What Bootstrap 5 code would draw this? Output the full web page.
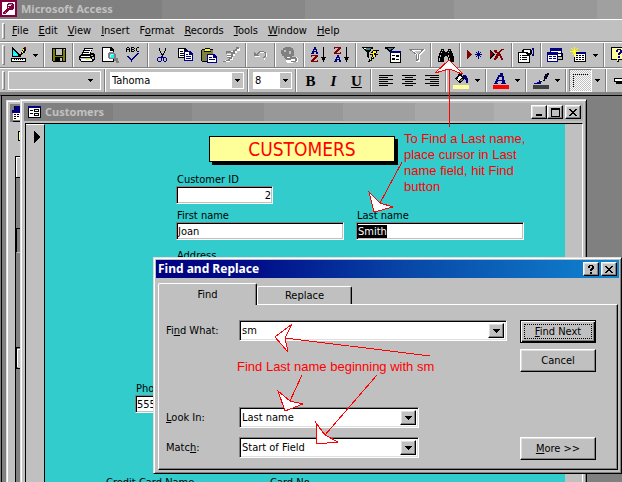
<!DOCTYPE html>
<html lang="en">
<head>
<meta charset="utf-8">
<meta name="viewport" content="width=device-width, initial-scale=1">
<title>Microsoft Access</title>
<link href="https://cdn.jsdelivr.net/npm/bootstrap@5.3.0/dist/css/bootstrap.min.css" rel="stylesheet">
<style>
:root{--face:#c0c0c0;--shade:#808080;--lite:#dfdfdf}
body{font:11px/14px "DejaVu Sans Condensed","Noto Sans",sans-serif;color:#000;background:var(--shade)}
svg{display:block;flex:none;shape-rendering:crispEdges}
button,select,input{font:inherit;color:#000;border-radius:0}
button{background:var(--face);border:0;padding:0}
select{appearance:none;border:0;background:none;padding:0 3px;outline:0}
u{text-underline-offset:1px}
.caption{font-family:"Noto Sans","DejaVu Sans",sans-serif;font-weight:700;line-height:18px}
.app-caption{height:19px;color:var(--face);background:linear-gradient(90deg,#808080 26%,#888 26% 49%,#909090 49% 73%,#989898 73% 96%,#a0a0a0 96%)}
.band{flex:none;background:var(--face);border-top:1px solid #fff;border-bottom:1px solid var(--shade)}
.menu-band{height:23px;padding-top:1px}
.tool-band{height:26px}
.format-band{height:27px;border-bottom-width:3px}
.grip{width:3px;flex:none;margin:2px;border:1px solid;border-color:#fff var(--shade) var(--shade) #fff}
.menu-item{padding:0 5px}
.tool{width:23px;flex:none;display:flex;align-items:center;justify-content:center}
.caret-tool{width:11px;flex:none;display:flex;align-items:center;justify-content:center}
.divide{width:2px;flex:none;margin:0 2px;border-left:1px solid var(--shade);border-right:1px solid #fff}
.glyph{font:700 15px/20px "Liberation Serif",serif}
.flatbox{flex:none;border:1px solid #fff;margin:2px 1px;width:93px}
.flatbox select,.whitebox select{width:100%;min-width:0}
.whitebox{flex:none;border:1px solid #fff;background:#fff;margin:3px 1px 3px 2px}
.whitebox select{padding:0 1px}
.whitebox .drop{background:var(--face)}
.drop{width:11px;flex:none;display:flex;align-items:center;justify-content:center}
.font-list{width:134px}
.size-list{width:39px}
.pressed{border:1px solid;border-color:var(--shade) #fff #fff var(--shade);background:repeating-conic-gradient(#fff 0 25%,#c0c0c0 0 50%) 0 0/2px 2px}
.desk{border-top:1px solid #000;border-left:1px solid var(--shade);box-shadow:inset 1px 0 #000}
.win{position:absolute;background:var(--face);border:1px solid;border-color:var(--lite) #000 #000 var(--lite);box-shadow:inset 1px 1px #fff,inset -1px -1px var(--shade);padding:3px}
.db-win{left:5px;top:4px;width:300px;bottom:-20px}
.form-win{left:19px;top:3px;right:35px;bottom:-20px}
.dialog{left:152px;top:161px;right:0;z-index:2;padding:2px}
.form-caption{height:18px;color:var(--face);background:linear-gradient(90deg,#808080 16%,#888 16% 30%,#909090 30% 43%,#989898 43% 57%,#a0a0a0 57% 70%,#a8a8a8 70% 84%,#b0b0b0 84%)}
.dialog-caption{height:18px;padding:0 2px;font-size:12px;color:#fff;background:linear-gradient(90deg,#000080,#000c88 20%,#0848a8 55%,#1084d0)}
.raised{border:1px solid;border-color:#fff #000 #000 #fff;box-shadow:inset -1px -1px var(--shade),inset 1px 1px var(--lite)}
.cap-btn{width:16px;height:14px;display:flex;align-items:center;justify-content:center}
.cap-close{margin-left:2px}
.form-caption .cap-close{margin-right:2px}
.form-view{margin:2px 0 0 1px;border-top:1px solid #000;border-left:1px solid #000;border-right:1px solid #fff}
.selector{width:19px;border-right:1px solid #000;border-top:1px solid #fff;padding:6px 0 0 8px}
.canvas{background:#33cccc;padding-top:12px}
.scroll-strip{width:17px}
.banner{width:186px;height:26px;margin-left:164px;border:1px solid #000;background:#ffff99;color:#f00;box-shadow:3px 3px #000;font-size:19px;line-height:25px}
.fields{margin-left:131px;padding-top:10px}
.sunk{display:block;width:100%;height:18px;background:#fff;border:1px solid;border-color:var(--shade) #fff #fff var(--shade);box-shadow:inset 1px 1px #000,inset -1px -1px var(--face);padding:0 1px;outline:0}
.sunk::selection{background:#000;color:#fff}
.fld label{display:block;padding-left:1px;height:14px;line-height:16px}
.w-id{width:97px}
.w-name{width:168px}
.last{margin-left:12px}
.phone{margin:119px 0 0 90px}
.credit{margin:63px 0 0 61px}
.ccn{width:164px}
.tab-row{margin:4px 2px 0;height:22px}
.tab-btn{border:1px solid;border-color:#fff #000 transparent #fff;border-bottom:0;border-radius:2px 2px 0 0;box-shadow:inset -1px 0 var(--shade)}
.tab-on{width:99px;height:22px;margin-bottom:-1px;z-index:1}
.tab-off{width:95px;height:18px}
.sheet{margin:0 1px 1px 2px;border:1px solid;border-color:#fff #000 #000 #fff;box-shadow:inset -1px -1px var(--shade);padding:15px 21px 9px 7px}
.lab{width:73px;flex:none}
.combo{height:21px;background:#fff;border:1px solid;border-color:var(--shade) #fff #fff var(--shade);box-shadow:inset 1px 1px #000,inset -1px -1px var(--lite);padding:2px}
.combo select,.combo input{border:0;outline:0;background:none;flex:1;min-width:0;padding:0}
.combo .drop{width:16px;background:var(--face)}
.w-short{width:180px}
.look{margin-top:66px}
.match{margin:9px 0 2px}
.push{width:76px;height:23px}
.cancel{margin-top:6px}
.default{border-color:#000;box-shadow:inset 1px 1px #fff,inset -1px -1px #000,inset -2px -2px var(--shade)}
.default span{display:block;margin:3px;border:1px dotted #000;line-height:13px}
.side{margin-left:13px}
.note{position:absolute;z-index:4;color:#f00;font:13px/16px "Liberation Sans",Arial,sans-serif;margin:0}
.note-a{left:404px;top:131px;width:136px}
.note-b{left:237px;top:359px;white-space:nowrap}
.arrows{position:absolute;left:0;top:0;z-index:3;pointer-events:none}
</style>
<script src="https://cdn.jsdelivr.net/npm/bootstrap@5.3.0/dist/js/bootstrap.bundle.min.js"></script>
</head>
<body>
<svg width="0" height="0" class="position-absolute" aria-hidden="true">
  <symbol id="tri" viewBox="0 0 5 3"><path d="M0 0h5v1H4v1H3v1H2V2H1V1H0z"/></symbol>
  <symbol id="bigtri" viewBox="0 0 7 4"><path d="M0 0h7v1H6v1H5v1H4v1H3V3H2V2H1V1H0z"/></symbol>
  <symbol id="cross" viewBox="0 0 8 7"><path d="M0 0h2v1h1v1h2V1h1V0h2v1H7v1H6v1H5v1h1v1h1v1h1v1H6V6H5V5H3v1H2v1H0V6h1V5h1V4h1V3H2V2H1V1H0z"/></symbol>
</svg>
<div class="vh-100 d-flex flex-column overflow-hidden position-relative">
  <header class="app-caption caption d-flex flex-shrink-0">
    <svg width="17" height="17" viewBox="0 0 17 17"><path fill="#800040" d="M0 0h17v17H0z"/><path fill="#fff" d="M2 2h13v13H2z"/><path fill="#800040" d="M8 3h5v1h1v5h-1v1H9v1H8v1H7v1H6v1H3v-2h1v-1h1v-1h1V9h1V4h1z"/><path fill="#fff" d="M8 5h3v1H8zM8 7h1v1H8z"/><path fill="#c080a0" d="M9 4h3v1H9zM5 12h1v1H5z"/></svg>
    <span class="ms-1">Microsoft Access</span>
  </header>

  <nav class="band menu-band d-flex" aria-label="Menu">
    <span class="grip"></span>
    <button class="menu-item"><u>F</u>ile</button><button class="menu-item"><u>E</u>dit</button><button class="menu-item"><u>V</u>iew</button><button class="menu-item"><u>I</u>nsert</button><button class="menu-item">F<u>o</u>rmat</button><button class="menu-item"><u>R</u>ecords</button><button class="menu-item"><u>T</u>ools</button><button class="menu-item"><u>W</u>indow</button><button class="menu-item"><u>H</u>elp</button>
  </nav>

  <div class="band tool-band d-flex" role="toolbar" aria-label="Form view">
    <span class="grip"></span>
    <button class="tool" aria-label="Design view"><svg width="16" height="16"><path d="M1 0h1v1h1v1h1v1h1v1h1v1h1v1h1v1h1v1h1v2H1zM0 11h15v4H0z"/><path fill="#0ff" d="M2 3h1v1h1v1h1v1h1v1h1v2H2z"/><path fill="#fff" d="M4 7h1v1H4zM1 12h13v2H1z"/><path d="M3 12h1v1H3zM5 12h1v1H5zM7 12h1v1H7zM9 12h1v1H9zM11 12h1v1h-1zM9 7h1V5h1V3h1V1h2v1h1v2h-1v2h-2v1h-1v1H9z"/><path fill="#ff0" d="M11 4h1V2h1v2h-1v2h-1z"/><path fill="#800000" d="M13 0h2v2h-1V1h-1z"/></svg></button>
    <button class="caret-tool" aria-label="Views"><svg width="5" height="3"><use href="#tri"/></svg></button>
    <span class="divide"></span>
    <button class="tool" aria-label="Save"><svg width="14" height="14"><path d="M0 0h14v14H1v-1H0z"/><path fill="#808000" d="M1 1h12v12H1z"/><path d="M3 1h8v7H3zM3 9h8v4H3z"/><path fill="#c0c0c0" d="M4 1h6v6H4zM12 1h1v1h-1zM8 10h2v3H8z"/></svg></button>
    <span class="divide"></span>
    <button class="tool" aria-label="Print"><svg width="17" height="15"><path d="M5 0h9v1h-1v2h-1v2h3v1h1v6h-1v1h-1v1H2v-1H1v-1H0V8h1V7h1V6h1V4h1V2h1z"/><path fill="#fff" d="M6 1h7v1h-1v2h-1v2H4V5h1V3h1zM2 8h9v1H2zM2 11h11v2H2z"/><path fill="#c0c0c0" d="M12 7h2v1h-2zM13 9h2v2h-2zM1 10h11v1H1z"/><path fill="#ff0" d="M7 11h3v1H7z"/><path d="M6 2h5v1H6zM5 4h5v1H5z"/></svg></button>
    <button class="tool" aria-label="Print preview"><svg width="17" height="16"><path d="M0 0h9l3 3v12H0z"/><path fill="#fff" d="M1 1h7v3h3v10H1z"/><path d="M8 1h1v2h2v1H8z"/><path fill="#808080" d="M7 5h5v1h1v1h1v4h2v3h1v2h-3v-2h-2v-2H7v-1H6V6h1z"/><path fill="#0ff" d="M8 7h4v4H8z"/><path fill="#fff" d="M9 7h2v1H9zM8 8h1v2H8z"/></svg></button>
    <button class="tool" aria-label="Spelling"><svg width="16" height="16"><path d="M1 0h2v1h1v4H3V3H1v2H0V1h1zM1 1v1h2V1zM5 0h3v1h1v1H8v1h1v1H8v1H5zM6 1v1h2V1zM6 3v1h2V3zM11 0h2v1h-2v3h2v1h-2V4h-1V1h1z"/><path fill="#000080" d="M1 9h2v1h1v1h1v1h1v-1h1v-1h1V9h1V8h1V7h1V6h2v1h-1v1h-1v1h-1v1H9v1H8v1H7v1H6v2H5v-2H4v-1H3v-1H2v-1H1z"/></svg></button>
    <span class="divide"></span>
    <button class="tool" aria-label="Cut"><svg width="11" height="15"><path d="M2 0h1v3h1v2h1v1h1V5h1V3h1V0h1v3H8v2H7v2H6v2H5V7H4V5H3V3H2z"/><path fill="#000080" d="M5 8h1v1h3v1h1v3H9v1H7v-1H6v-3H5v3H4v1H1v-1H0v-3h1V9h3V8zM2 10H1v3h3v-3zM7 10v3h2v-3z"/></svg></button>
    <button class="tool" aria-label="Copy"><svg width="16" height="14"><path d="M0 0h7l3 3v7H0z"/><path fill="#fff" d="M1 1h5v3h3v5H1z"/><path d="M2 3h3v1H2zM2 5h4v1H2zM2 7h4v1H2z"/><path fill="#000080" d="M6 3h6l3 3v7H6z"/><path fill="#fff" d="M7 4h4v3h3v5H7z"/><path fill="#000080" d="M8 6h2v1H8zM8 8h5v1H8zM8 10h5v1H8z"/></svg></button>
    <button class="tool" aria-label="Paste"><svg width="16" height="15"><path d="M1 1h3V0h5v1h3v13H1v-1H0V2h1z"/><path fill="#808040" d="M1 2h11v11H1z"/><path fill="#ff0" d="M4 1h5v2H4z"/><path d="M3 3h7v1H3z"/><path fill="#000080" d="M6 6h7l3 3v6H6z"/><path fill="#fff" d="M7 7h5v3h3v4H7z"/><path fill="#000080" d="M8 9h3v1H8zM8 11h6v1H8z"/></svg></button>
    <button class="tool" aria-label="Format painter" disabled><svg width="17" height="16"><path fill="#fff" d="M14 1h3v3h-3v2h-2v3h-2v4H7v2H2v-2h3v-3H4V6h4V4h3z"/><path fill="#808080" d="M13 0h3v2h-2v2h-2v3h-2v3H9v2H7v2H3v1H0v-1h3v-1h2v-1h1v-1H4v-1h4V9H4V8h4V7H3V4h5v1h2V3h2V2h1z"/><path fill="#c0c0c0" d="M4 6h4v1H4zM5 11h1v1H5z"/></svg></button>
    <span class="divide"></span>
    <button class="tool" aria-label="Undo" disabled><svg width="14" height="10"><path fill="#fff" d="M1 3h1v2h1v1h3v1H1zM6 2h5v1h2v4h-2v3h-1V7h2V4h-1V3H6z"/><path fill="#808080" d="M0 2h1v1h1v1h1V3h1V2h1V1h5v1h2v5h-1v1h-2V7h1V6h1V3h-1V2H6v1H5v1H4v1h1v1H0z"/></svg></button>
    <span class="divide"></span>
    <button class="tool" aria-label="Insert hyperlink" disabled><svg width="17" height="16"><path fill="#808080" d="M4 0h6v1h2v2h1v6h-2v2H3V9H1V7H0V3h2V1h2z"/><path fill="#c0c0c0" d="M3 3h2v2H3zM8 4h2v3H8z"/><path fill="#fff" d="M6 9h5v1h5v1h1v4h-5v1H6v-1H5v-5h1z"/><path fill="#808080" d="M5 8h5v1h1v3h-1v1H5v-1H4V9h1zM6 10v1h3v-1zM10 10h5v1h1v3h-1v1h-5v-1h4v-2h-4z"/></svg></button>
    <span class="divide"></span>
    <button class="tool" aria-label="Sort ascending"><svg width="16" height="16"><path fill="#000080" d="M3 0h2v2h1v3h1v2H5V5H3v2H0V6h1V4h1V2h1zM3 3v1h2V3z"/><path fill="#800000" d="M0 8h7v2H6v1H5v1H4v1H3v1h3v-1h1v2H0v-2h1v-1h1v-1h1v-1h1V9H1v1H0z"/><path d="M12 0h1v10h2v1h-1v2h-1v2h-1v-2h-1v-2h-1v-1h2z"/></svg></button>
    <button class="tool" aria-label="Sort descending"><svg width="16" height="16"><path fill="#800000" d="M0 0h7v2H6v1H5v1H4v1H3v1h3V5h1v2H0V5h1V4h1V3h1V2h1V1H1v1H0z"/><path fill="#000080" d="M3 8h2v2h1v3h1v2H5v-2H3v2H0v-1h1v-2h1v-2h1zM3 11v1h2v-1z"/><path d="M12 0h1v10h2v1h-1v2h-1v2h-1v-2h-1v-2h-1v-1h2z"/></svg></button>
    <span class="divide"></span>
    <button class="tool" aria-label="Filter by selection"><svg width="17" height="16"><path d="M0 0h11v2H9v2H8v1H7v6H6v-1H5V5H4V4H3V3H2V2H1V1H0z"/><path fill="#408080" d="M2 1h7L8 3H4z"/><path fill="#fff" d="M2 1h2v1H2z"/><path d="M11 3h6v1h-2v2h-1v1h2v1h-2v2h-2v2h-2v2H8v1H6v-1h1v-2h2v-2h1V8H8V7h1V5h1z"/><path fill="#ff0" d="M11 4h3v2h-2v2h1v2h-2v1h-1v1H9v1H8v-1h2v-2h1V7H9V6h2z"/></svg></button>
    <button class="tool" aria-label="Filter by form"><svg width="17" height="16"><path d="M0 0h10v1H9v1H8v1H7v1H6v6H5V5H4V4H3V3H2V2H0z"/><path fill="#408080" d="M2 1h6v1H6v1H4z"/><path d="M5 4h11v12H5z"/><path fill="#000080" d="M5 4h11v2H5z"/><path fill="#fff" d="M6 6h9v9H6z"/><path d="M7 8h3v1H7zM11 8h3v2h-3zM7 11h3v2H7zM11 12h3v1h-3z"/></svg></button>
    <button class="tool" aria-label="Apply filter" disabled><svg width="16" height="14"><path fill="none" stroke="#fff" stroke-width="2" d="M2 2h13l-5 5v6H8V7L3 2"/><path fill="none" stroke="#808080" d="M1 1.500h13L9.500 6.500v5l-2 1v-6z"/></svg></button>
    <span class="divide"></span>
    <button class="tool" aria-label="Find"><svg width="16" height="13"><path d="M3 0h3v2h1v1h2V2h1V0h3v2h1v2h1v3h1v6h-6V8H9V7H7v1H6v5H0V7h1V4h1V2h1z"/><path fill="#c0c0c0" d="M3 3h1v1H3zM2 6h1v2H2zM1 9h1v3H1zM10 3h1v1h-1zM10 6h1v2h-1zM11 9h1v3h-1zM4 1h1v1H4zM11 1h1v1h-1z"/></svg></button>
    <span class="divide"></span>
    <button class="tool" aria-label="New record"><svg width="15" height="10"><path fill="#800000" d="M0 0h1v1h1v1h1v1h1v1h1v1H4v1H3v1H2v1H1v1H0z"/><path fill="#000080" d="M11 1h1v2h1V2h1v1h-1v1h2v1h-2v1h1v1h-1V6h-1v3h-1V6h-1v1H9V6h1V5H8V4h2V3H9V2h1v1h1z"/></svg></button>
    <button class="tool" aria-label="Delete record"><svg width="15" height="13"><path d="M0 1h1v1h1v1h1v1h1v1h1v1H4v1H3v1H2v1H1v1H0z"/><path fill="#800000" d="M0 2l4 3-4 3zM4 1h3v2h2V2h1V1h1V0h3v1h-2v1h-1v1h-1v2h1v2h1v2h1v2h-2V9h-1V7H8v2H7v1H6v1H4V9h1V7h1V5h1V4H5V3H4z"/></svg></button>
    <span class="divide"></span>
    <button class="tool" aria-label="Properties"><svg width="17" height="15"><path d="M0 4h12v11H0z"/><path fill="#fff" d="M1 5h10v9H1z"/><path d="M2 7h1v1H2zM4 7h5v1H4zM2 9h1v1H2zM4 9h5v1H4zM2 11h1v1H2zM4 11h5v1H4z"/><path d="M5 1h8v1h1v4h-1v1h-2v1H9V6H8V5H6V4H4V2h1z"/><path fill="#fff" d="M6 2h6v3h-2V4H6z"/><path fill="#000080" d="M14 0h2v8h-2V6h1V2h-1z"/></svg></button>
    <span class="divide"></span>
    <button class="tool" aria-label="Database window"><svg width="17" height="15"><path fill="#000080" d="M3 0h12v9H3z"/><path fill="#fff" d="M4 3h10v5H4z"/><path fill="#000080" d="M0 4h11v10H0z"/><path fill="#fff" d="M1 7h9v6H1z"/><path fill="#000080" d="M2 8h3v1H2zM6 8h3v1H6zM2 10h3v1H2zM6 10h3v1H6z"/><path d="M11 5h5v7h-5v-1h4V9h-4V8h4V6h-4z"/></svg></button>
    <button class="tool" aria-label="New object"><svg width="17" height="16"><path d="M4 5h12v10H4z"/><path fill="#000080" d="M5 5h11v2H5z"/><path fill="#fff" d="M5 7h10v7H5z"/><path d="M6 8h2v1H6zM9 8h2v1H9zM12 8h2v1h-2zM6 10h2v1H6zM9 10h2v1H9zM12 10h2v1h-2zM6 12h2v1H6zM9 12h2v1H9zM12 12h2v1h-2z"/><path fill="#ff0" d="M4 0h1v3h1V2h1V1h1v1H7v1H6v1h3v1H6v2h1v1H6V7H5v3H4V7H3v1H2V7h1V5H0V4h3V3H2V2H1V1h1v1h1v1h1z"/><path fill="#fff" d="M4 4h1v1H4z"/></svg></button>
    <button class="caret-tool" aria-label="New object list"><svg width="5" height="3"><use href="#tri"/></svg></button>
    <span class="divide"></span>
    <button class="tool" aria-label="Help"><svg width="16" height="16"><path d="M0 0h16v13H8v2H6v-2H0z"/><path fill="#ff9" d="M1 1h14v11H7v2H6v-2H1z"/><path fill="#000080" d="M5 3h1V2h4v1h1v3h-1v1H9v1H7V6h1V5h1V3H7v2H5zM7 9h2v2H7z"/></svg></button>
  </div>

  <div class="band format-band d-flex" role="toolbar" aria-label="Formatting">
    <span class="grip"></span>
    <div class="flatbox d-flex"><select aria-label="Object"><option></option></select><span class="drop me-1"><svg width="5" height="3"><use href="#tri"/></svg></span></div>
    <span class="divide"></span>
    <div class="whitebox font-list d-flex"><select aria-label="Font"><option>Tahoma</option></select><span class="drop"><svg width="5" height="3"><use href="#tri"/></svg></span></div>
    <span class="divide"></span>
    <div class="whitebox size-list d-flex"><select aria-label="Font size"><option>8</option></select><span class="drop"><svg width="5" height="3"><use href="#tri"/></svg></span></div>
    <span class="divide"></span>
    <button class="tool glyph">B</button><button class="tool glyph fst-italic">I</button><button class="tool glyph text-decoration-underline">U</button>
    <span class="divide"></span>
    <button class="tool" aria-label="Align left"><svg width="14" height="11"><path d="M0 0h14v1H0zM0 2h9v1H0zM0 4h14v1H0zM0 6h9v1H0zM0 8h14v1H0zM0 10h9v1H0z"/></svg></button>
    <button class="tool" aria-label="Center"><svg width="14" height="11"><path d="M0 0h14v1H0zM3 2h8v1H3zM0 4h14v1H0zM3 6h8v1H3zM0 8h14v1H0zM3 10h8v1H3z"/></svg></button>
    <button class="tool" aria-label="Align right"><svg width="14" height="11"><path d="M0 0h14v1H0zM5 2h9v1H5zM0 4h14v1H0zM5 6h9v1H5zM0 8h14v1H0zM5 10h9v1H5z"/></svg></button>
    <span class="divide"></span>
    <button class="tool" aria-label="Fill color"><svg width="16" height="16"><path d="M6 0h2v1h1v2h1v1h1v1h1v1h-1v1h-1v1H9v1H8v1H6V9H5V8H4V7H3V6H2V5h1V4h1V3h1V1h1z"/><path fill="#fff" d="M6 3h2v1h1v1H8v1H7v1H6v1H5V7H4V6h1V4h1z"/><path fill="#808080" d="M8 6h2v1H9v1H7V7h1z"/><path fill="#000080" d="M10 2h3v1h1v2h1v5h-2V7h-1V5h-1V4h-1z"/><path fill="#ff9" d="M0 12h16v4H0z"/></svg></button>
    <button class="caret-tool" aria-label="Fill colors"><svg width="5" height="3"><use href="#tri"/></svg></button>
    <span class="divide"></span>
    <button class="tool" aria-label="Font color"><svg width="16" height="16"><path fill="#000080" d="M7 0h3v3h1v4h1v3h1v1H8v-1h1V8H5v1H4v1h1v1H1v-1h1V8h1V6h1V4h1V2h2zM7 4H6v2H5v1h4V4z"/><path fill="red" d="M0 12h16v4H0z"/></svg></button>
    <button class="caret-tool" aria-label="Font colors"><svg width="5" height="3"><use href="#tri"/></svg></button>
    <span class="divide"></span>
    <button class="tool" aria-label="Line color"><svg width="16" height="16"><path d="M14 0h2v2h-1v2h-1v2h-2v2h-2V5h1V3h1V1h2z"/><path fill="#000080" d="M14 1h1L12 6h-1zM1 10h3V9h2V7h2v1h1v1H8v2H1z"/><path fill="#c0c0c0" d="M9 5h2v2H9z"/><path fill="#ff9" d="M7 7h2v1H7z"/><path fill="#404040" d="M0 12h16v4H0z"/></svg></button>
    <button class="caret-tool" aria-label="Line colors"><svg width="5" height="3"><use href="#tri"/></svg></button>
    <span class="divide"></span>
    <button class="tool pressed" aria-label="Border width"><svg width="15" height="14"><path fill="none" stroke="#000" stroke-dasharray="1 1" d="M0 .5h15M.5 0v14"/></svg></button>
    <button class="caret-tool" aria-label="Border widths"><svg width="5" height="3"><use href="#tri"/></svg></button>
    <span class="divide"></span>
    <button class="tool" aria-label="Special effect"><svg width="14" height="6"><path d="M0 0h14v6H2V4H0z"/><path fill="#fff" d="M1 1h12v2H1z"/></svg></button>
  </div>

  <main class="desk flex-grow-1 position-relative">
    <section class="win db-win" aria-label="Database">
      <svg width="40" height="400"><path fill="#808080" d="M0 0h40v18H0z"/><path fill="#000080" d="M4 2h12v4H4zM2 6h12v3H2z"/><path d="M2 6h1v12h13v-1H3V6zM4 2v4h1V2z"/><path fill="#fff" d="M3 9h13v7H3z"/><path d="M4 10h2v1H4zM4 12h2v1H4zM7 10h2v1H7zM7 12h2v1H7zM4 14h2v1H4zM8 27h8v10H8z"/><path fill="#ff9" d="M9 28h8v8H9z"/><path fill="#808080" d="M6 53h30v347H6z"/><path d="M5 52h30v1H6v347H5z"/><path fill="#c0c0c0" d="M6 53h30v21H6zM7 148h30v1H7z"/><path fill="#fff" d="M6 53h30v1H7v20H6zM7 245h30v1H8v17H7z"/><path d="M6 73h30v1H6zM6 124h30v1H7v23H6zM6 243h30v1H7v21H6z"/><path fill="#c0c0c0" d="M8 246h30v18H8z"/><path d="M6 264h30v1H6z"/></svg>
    </section>

    <section class="win form-win d-flex flex-column" aria-label="Customers">
      <div class="form-caption caption d-flex align-items-center">
        <svg width="13" height="12" class="ms-1"><path d="M0 0h13v12H0z"/><path fill="#fff" d="M1 2h11v9H1z"/><path fill="#000080" d="M0 0h13v2H0z"/><path d="M2 4h3v1H2zM2 7h3v1H2zM6 3h5v3H6zM6 7h5v3H6z"/><path fill="#fff" d="M7 4h3v1H7zM7 8h3v1H7z"/></svg>
        <span class="ms-1 me-auto">Customers</span>
        <button class="raised cap-btn" aria-label="Minimize"><svg width="8" height="8"><path d="M1 6h6v2H1z"/></svg></button>
        <button class="raised cap-btn" aria-label="Maximize"><svg width="9" height="9"><path d="M0 0h9v9H0zM1 2v6h7V2z" fill-rule="evenodd"/></svg></button>
        <button class="raised cap-btn cap-close" aria-label="Close"><svg width="8" height="7"><use href="#cross"/></svg></button>
      </div>
      <div class="form-view d-flex flex-grow-1">
        <div class="selector flex-shrink-0"><svg width="7" height="12"><path d="M0 0h1v1h1v1h1v1h1v1h1v1h1v2H5v1H4v1H3v1H2v1H1v1H0z"/></svg></div>
        <form class="canvas flex-grow-1">
          <div class="banner text-center">CUSTOMERS</div>
          <div class="fields d-flex flex-column">
            <div class="fld w-id"><label for="cid">Customer ID</label><input class="sunk text-end" id="cid" value="2"></div>
            <div class="d-flex pt-1">
              <div class="fld w-name"><label for="fn">First name</label><input class="sunk" id="fn" value="Joan"></div>
              <div class="fld w-name last"><label for="ln">Last name</label><input class="sunk" id="ln" value="Smith"></div>
            </div>
            <div class="fld pt-2"><label>Address</label></div>
          </div>
          <div class="fld phone w-name"><label for="ph">Phone</label><input class="sunk" id="ph" value="555-1234"></div>
          <div class="credit d-flex"><span class="ccn">Credit Card Name</span><span>Card No</span></div>
        </form>
        <div class="scroll-strip flex-shrink-0"></div>
      </div>
    </section>

    <section class="win dialog" role="dialog" aria-label="Find and Replace">
      <div class="dialog-caption caption d-flex align-items-center">
        <span class="me-auto">Find and Replace</span>
        <button class="raised cap-btn" aria-label="Help"><svg width="6" height="9"><path d="M1 0h4v1h1v3H5v1H4v1H2V4h1V3h1V1H2v2H0V1h1zM2 7h2v2H2z"/></svg></button>
        <button class="raised cap-btn cap-close" aria-label="Close"><svg width="8" height="7"><use href="#cross"/></svg></button>
      </div>
      <div class="tab-row d-flex align-items-end" role="tablist">
        <button class="tab-btn tab-on position-relative" role="tab" aria-selected="true">Find</button>
        <button class="tab-btn tab-off" role="tab">Replace</button>
      </div>
      <div class="sheet d-flex">
        <div class="flex-grow-1">
          <div class="d-flex align-items-center"><label class="lab" for="what">Fi<u>n</u>d What:</label><div class="combo d-flex flex-grow-1"><input id="what" value="sm"><span class="drop raised"><svg width="7" height="4"><use href="#bigtri"/></svg></span></div></div>
          <div class="look d-flex align-items-center"><label class="lab" for="look"><u>L</u>ook In:</label><div class="combo w-short d-flex"><select id="look"><option>Last name</option></select><span class="drop raised"><svg width="7" height="4"><use href="#bigtri"/></svg></span></div></div>
          <div class="match d-flex align-items-center"><label class="lab" for="mat">Matc<u>h</u>:</label><div class="combo w-short d-flex"><select id="mat"><option>Start of Field</option></select><span class="drop raised"><svg width="7" height="4"><use href="#bigtri"/></svg></span></div></div>
        </div>
        <div class="side d-flex flex-column">
          <button class="raised push default"><span><u>F</u>ind Next</span></button>
          <button class="raised push cancel">Cancel</button>
          <button class="raised push mt-auto"><u>M</u>ore &gt;&gt;</button>
        </div>
      </div>
    </section>
  </main>

  <svg class="arrows" width="622" height="482" aria-hidden="true"><g fill="#fff" stroke="red"><path d="M449.500 127V69M402 162l-22 41M430 356l-145-18M302 375l-12 26M377 375l-52 60"/><path d="M449 60l-14 13 14-4 14 5zM369 192l11 11 13 4-19 5zM292 324l-17 13 13 15-3-14zM278 391l12 10 13 3-18 7zM316 423l9 12 13 7-21 2z"/></g></svg>
  <p class="note note-a">To Find a Last name, place cursor in Last name field, hit Find button</p>
  <p class="note note-b">Find Last name beginning with sm</p>
</div>
<script>document.getElementById('ln').focus();document.getElementById('ln').select();</script>
</body>
</html>
